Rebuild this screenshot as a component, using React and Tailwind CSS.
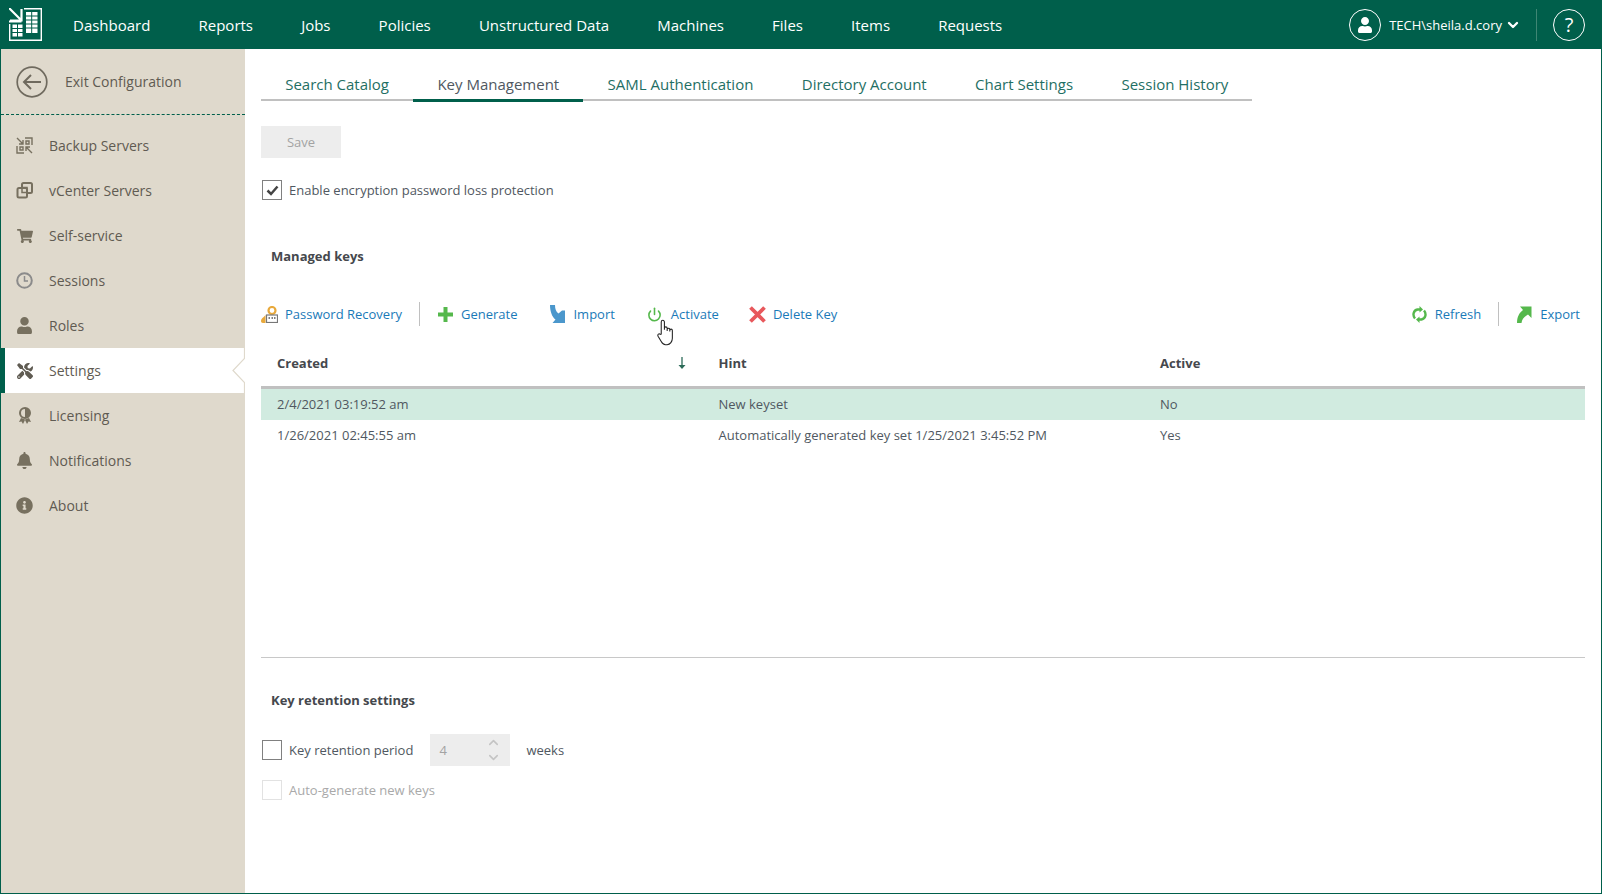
import React from "react";
import { FaBell, FaInfoCircle, FaShoppingCart, FaTools, FaUser } from "react-icons/fa";
import { ChevronDown, ChevronUp, Power } from "lucide-react";

const navItems = ["Dashboard", "Reports", "Jobs", "Policies", "Unstructured Data", "Machines", "Files", "Items", "Requests"];
const tabs = ["Search Catalog", "Key Management", "SAML Authentication", "Directory Account", "Chart Settings", "Session History"];

const Logo = () => (
  <svg width="33" height="33" viewBox="0 0 33 33" fill="none" stroke="#fff">
    <path d="M0 0l12 12M12.500 1v11.500H1" strokeWidth="2.200" />
    <path d="M0 12.500h12.500v2H0z" fill="#fff" strokeWidth="0" />
    <path d="M15 .7h17.300v31.600H.7V16" strokeWidth="1.400" />
    <rect x="17" y="4" width="11.500" height="21" fill="#fff" strokeWidth="0" />
    <path d="M17 8h12M17 12h12M17 16h12M17 20h12M22.700 4v21" stroke="#005f4b" strokeWidth="1" />
    <rect x="3.500" y="16.500" width="10" height="12" fill="#fff" strokeWidth="0" />
    <path d="M3 20.500h11M3 24.500h11M8.500 16v13" stroke="#005f4b" strokeWidth="1" />
  </svg>
);

const BackupIcon = () => (
  <svg width="17" height="17" viewBox="0 0 17 17" fill="none" stroke="#77705f" strokeWidth="1.400">
    <path d="M9 1h7v7M8 16H1V9" />
    <path d="M1 1l6 6M7 3v4H3M16 16l-6-6M10 14v-4h4" />
    <path d="M10 4h3v3h-3zM4 10h3v3H4z" />
  </svg>
);

const VCenterIcon = () => (
  <svg width="17" height="17" viewBox="0 0 17 17" fill="none" stroke="#77705f" strokeWidth="2">
    <path d="M6 5V2.500A1.500 1.500 0 0 1 7.500 1h7A1.500 1.500 0 0 1 16 2.500v7a1.500 1.500 0 0 1-1.500 1.500H12" />
    <rect x="1.500" y="6" width="9.500" height="9.500" rx="1.500" />
    <rect x="6" y="5.500" width="5" height="5" strokeWidth="1.500" />
  </svg>
);

const ClockIcon = () => (
  <svg width="17" height="17" viewBox="0 0 17 17" fill="none" stroke="#8b8b8b" strokeWidth="2">
    <circle cx="8.500" cy="8.500" r="7.300" />
    <path d="M8.500 4v5h3.500" strokeWidth="1.500" />
  </svg>
);

const LicenseIcon = () => (
  <svg width="14" height="17" viewBox="0 0 14 17">
    <circle cx="7" cy="6" r="5" fill="#dfd9cc" stroke="#77705f" strokeWidth="2" />
    <path d="M7 1a5 5 0 0 1 0 10z" fill="#77705f" />
    <path d="M3 11l-2 4 2.500-.5L5 17l2-4 2 4 1.500-2.500 2.500.5-2-4-4 1.500z" fill="#77705f" />
  </svg>
);

const sideItems = [
  { name: "Backup Servers", icon: <BackupIcon /> },
  { name: "vCenter Servers", icon: <VCenterIcon /> },
  { name: "Self-service", icon: <FaShoppingCart size={16} className="text-[#77705f]" /> },
  { name: "Sessions", icon: <ClockIcon /> },
  { name: "Roles", icon: <FaUser size={17} className="text-[#77705f]" /> },
  { name: "Settings", icon: <FaTools size={16} className="text-[#5f5b52]" />, active: true },
  { name: "Licensing", icon: <LicenseIcon /> },
  { name: "Notifications", icon: <FaBell size={17} className="text-[#77705f]" /> },
  { name: "About", icon: <FaInfoCircle size={17} className="text-[#77705f]" /> },
];

const RecoveryIcon = () => (
  <svg width="17" height="17" viewBox="0 0 17 17" fill="none">
    <circle cx="11" cy="4.500" r="3.500" stroke="#e8a93c" strokeWidth="2.200" />
    <path d="M4.500 9C3 11 0 12.500 0 15.200A1.800 1.800 0 0 0 1.800 17H4.500z" fill="#e8a93c" />
    <rect x="5.500" y="9" width="11" height="7.500" fill="#fff" stroke="#777" strokeWidth="1.200" />
    <path d="M7.500 12h1.500M10.500 12h1.500M13 12h1.500" stroke="#555" strokeWidth="1.500" />
  </svg>
);

const PlusIcon = () => (
  <svg width="15" height="15" viewBox="0 0 15 15">
    <path d="M5.500 0h4v5.500H15v4H9.500V15h-4V9.500H0v-4h5.500z" fill="#55b84c" />
  </svg>
);

const ImportIcon = () => (
  <svg width="15" height="18" viewBox="0 0 15 18">
    <path d="M0 0h5c0 4 1 6.500 3.500 8.500L12 5.500h3V18H2.500l3-3.500C2 12 0 6 0 0z" fill="#4b97cc" />
  </svg>
);

const DeleteIcon = () => (
  <svg width="17" height="17" viewBox="0 0 17 17">
    <path d="M1.500 1.500l14 14M15.500 1.500l-14 14" stroke="#e8585c" strokeWidth="3.800" />
  </svg>
);

const RefreshIcon = () => (
  <svg width="15" height="17" viewBox="0 0 15 17" fill="none" stroke="#55b84c" strokeWidth="2.400">
    <path d="M3 12.500C.500 9.500 1 4.500 5.500 3.500H8" />
    <path d="M12 4.500c2.500 3 2 8-2.500 9H7" />
    <path d="M7.500 0l3.500 3.500-3.500 3z" fill="#55b84c" strokeWidth="0" />
    <path d="M7.500 10.500L4 13.500 7.500 17z" fill="#55b84c" strokeWidth="0" />
  </svg>
);

const ExportIcon = () => (
  <svg width="15" height="17" viewBox="0 0 15 17">
    <path d="M0 17C0 11 2 7 6 4L3 .5h11.500V12L11 8.500C7.500 10.500 5 13 4.500 17z" fill="#55b84c" />
  </svg>
);

const HandCursor = () => (
  <svg width="18" height="27" viewBox="0 0 17 25" className="absolute left-[657px] top-[319px]">
    <path
      d="M4 14V2.500a1.500 1.500 0 0 1 3 0V10V8.500a1.300 1.300 0 0 1 2.600 0V11V9.500a1.300 1.300 0 0 1 2.500 0V11.500V10.500a1.200 1.200 0 0 1 2.400 0V18c0 3-2 6-5 6H8c-2 0-3-1-4-3L1 16c-.800-1.500 1-3 2-1.800z"
      fill="#fff"
      stroke="#222"
      strokeWidth="1"
    />
  </svg>
);

const Action = ({ icon, label, className }) => (
  <button className={`flex items-center gap-[7px] text-[#1a7ab8] ${className || ""}`}>
    <span className="flex w-[17px] justify-center">{icon}</span>
    <span className="pt-px">{label}</span>
  </button>
);

const Box = ({ checked, muted }) => (
  <span className={`flex h-5 w-5 items-center justify-center border bg-white ${muted ? "border-[#e2e2e2]" : "border-[#808080]"}`}>
    {checked && (
      <svg width="13" height="11" viewBox="0 0 13 11">
        <path d="M1.500 5.500l3.500 3.500 6.500-7.500" fill="none" stroke="#444" strokeWidth="2.500" />
      </svg>
    )}
  </span>
);

export default function App() {
  return (
    <div
      className="flex h-[894px] w-[1602px] flex-col overflow-hidden bg-white text-[13px] text-[#505861]"
      style={{ fontFamily: '"Open Sans", sans-serif' }}
    >
      {/* Header */}
      <header className="flex h-[49px] shrink-0 items-center bg-[#005f4b] pl-[9px] text-white">
        <Logo />
        <nav className="ml-[31px] flex gap-[48.1px] pt-px text-[15px]">
          {navItems.map((item) => (
            <span key={item}>{item}</span>
          ))}
        </nav>
        <div className="ml-auto flex items-center">
          <span className="flex h-8 w-8 items-center justify-center rounded-full border-[1.5px] border-white">
            <FaUser size={16} />
          </span>
          <span className="ml-2 pt-[2px] text-[13px]">TECH\sheila.d.cory</span>
          <ChevronDown size={16} strokeWidth={3.500} className="ml-[3px]" />
          <span className="ml-[15px] h-8 w-px bg-[#3f8674]" />
          <span className="ml-4 mr-[17px] flex h-8 w-8 items-center justify-center rounded-full border-[1.5px] border-white text-[20px]">?</span>
        </div>
      </header>

      <div className="relative flex min-h-0 flex-1 border-x border-b border-[#005f4b]">
        {/* Sidebar */}
        <aside className="w-[244px] shrink-0 bg-[#dfd9cc] text-[14px]">
          <div className="flex h-[66px] items-center gap-[17px] border-b border-dashed border-[#005f4b] pl-[15px] text-[#5f5b52]">
            <svg width="32" height="32" viewBox="0 0 32 32" fill="none" stroke="#6f6a5e" strokeWidth="1.700">
              <circle cx="16" cy="16" r="14.800" />
              <path d="M25 16H8M15 9l-7 7 7 7" strokeWidth="2" />
            </svg>
            Exit Configuration
          </div>
          <div className="pt-[8px]">
            {sideItems.map((item) => (
              <div
                key={item.name}
                className={`relative flex h-[45px] items-center text-[#5f5b52] ${item.active ? "-ml-px border-l-[5px] border-[#005f4b] bg-white pl-[11px]" : "pl-[15px]"}`}
              >
                <span className="flex w-[17px] justify-center">{item.icon}</span>
                <span className="ml-4">{item.name}</span>
                {item.active && (
                  <svg width="13" height="45" viewBox="0 0 13 45" fill="none" className="absolute right-0 top-0">
                    <path d="M12.500 0v10.500L1 22.500l11.500 12V45" stroke="#dfd9cc" strokeWidth="1.200" />
                  </svg>
                )}
              </div>
            ))}
          </div>
        </aside>

        {/* Content */}
        <main className="min-w-0 flex-1 pl-4 pr-4">
          <div className="mt-[21px] flex w-[991px] whitespace-nowrap border-b-2 border-[#c0c0c0] text-[15px] leading-[29px]">
            {tabs.map((tab) => (
              <span
                key={tab}
                className={`-mb-[3px] border-b-[3px] px-[24.2px] ${tab === "Key Management" ? "border-[#005f4b] text-[#505861]" : "border-transparent text-[#1f6f64]"}`}
              >
                {tab}
              </span>
            ))}
          </div>

          <button className="mt-[25px] block h-8 w-20 bg-[#ededed] pt-[2px] text-[#a3a3a3]">Save</button>

          <label className="ml-px mt-[22px] flex h-5 items-center gap-[7px]">
            <Box checked />
            <span className="pt-[2px]">Enable encryption password loss protection</span>
          </label>

          <h2 className="ml-[10px] mt-[46px] font-bold leading-5 text-[#45484d]">Managed keys</h2>

          {/* Toolbar */}
          <div className="mt-[36px] flex h-6 items-center">
            <button className="flex items-center gap-[7px] text-[#1a7ab8]">
              <RecoveryIcon />
              <span className="pt-px">Password Recovery</span>
            </button>
            <span className="ml-[17px] h-6 w-px bg-[#c0c0c0]" />
            <Action className="ml-[17px]" icon={<PlusIcon />} label="Generate" />
            <Action className="ml-[32px]" icon={<ImportIcon />} label="Import" />
            <Action className="ml-[31px] !gap-2" icon={<Power size={15} strokeWidth={2.500} className="text-[#55b84c]" />} label="Activate" />
            <Action className="ml-[30px]" icon={<DeleteIcon />} label="Delete Key" />
            <Action className="ml-auto" icon={<RefreshIcon />} label="Refresh" />
            <span className="ml-[17px] h-6 w-px bg-[#c0c0c0]" />
            <Action className="ml-[17px] mr-[5px]" icon={<ExportIcon />} label="Export" />
          </div>

          {/* Table */}
          <div className="mt-[19px] grid h-[44px] grid-cols-[457.5px_441.5px_1fr] border-b-[3px] border-[#c0c0c0] pt-[2px] font-bold leading-[32px] text-[#45484d]">
            <div className="flex h-8 items-center justify-between pl-4 pr-[33px]">
              Created
              <svg width="8" height="12" viewBox="0 0 8 12">
                <path d="M4 0v10" stroke="#2c6b58" strokeWidth="1.300" />
                <path d="M.500 8L4 12l3.500-4z" fill="#2c6b58" />
              </svg>
            </div>
            <div>Hint</div>
            <div>Active</div>
          </div>
          <div className="grid h-[31px] grid-cols-[457.5px_441.5px_1fr] items-center bg-[#d1ebe0]">
            <div className="pl-4">2/4/2021 03:19:52 am</div>
            <div>New keyset</div>
            <div>No</div>
          </div>
          <div className="grid h-[31px] grid-cols-[457.5px_441.5px_1fr] items-center">
            <div className="pl-4">1/26/2021 02:45:55 am</div>
            <div>Automatically generated key set 1/25/2021 3:45:52 PM</div>
            <div>Yes</div>
          </div>

          <div className="mt-[206px] h-px bg-[#c8c8c8]" />

          <h2 className="ml-[10px] mt-[32px] font-bold leading-5 text-[#45484d]">Key retention settings</h2>

          <div className="ml-px mt-[24px] flex h-8 items-center">
            <label className="flex h-5 items-center gap-[7px]">
              <Box />
              <span className="pt-[2px]">Key retention period</span>
            </label>
            <span className="ml-[17px] flex h-8 w-20 items-center justify-between bg-[#ededed] pl-[9px] pr-[9px] text-[#a3a3a3]">
              <span className="pt-[2px]">4</span>
              <span className="flex flex-col text-[#c4c4c4]">
                <ChevronUp size={15} strokeWidth={2.500} />
                <ChevronDown size={15} strokeWidth={2.500} />
              </span>
            </span>
            <span className="ml-4 pt-[2px]">weeks</span>
          </div>

          <label className="ml-px mt-[14px] flex h-5 items-center gap-[7px] text-[#a9a9a9]">
            <Box muted />
            <span className="pt-[2px]">Auto-generate new keys</span>
          </label>
        </main>
      </div>

      <HandCursor />
    </div>
  );
}
